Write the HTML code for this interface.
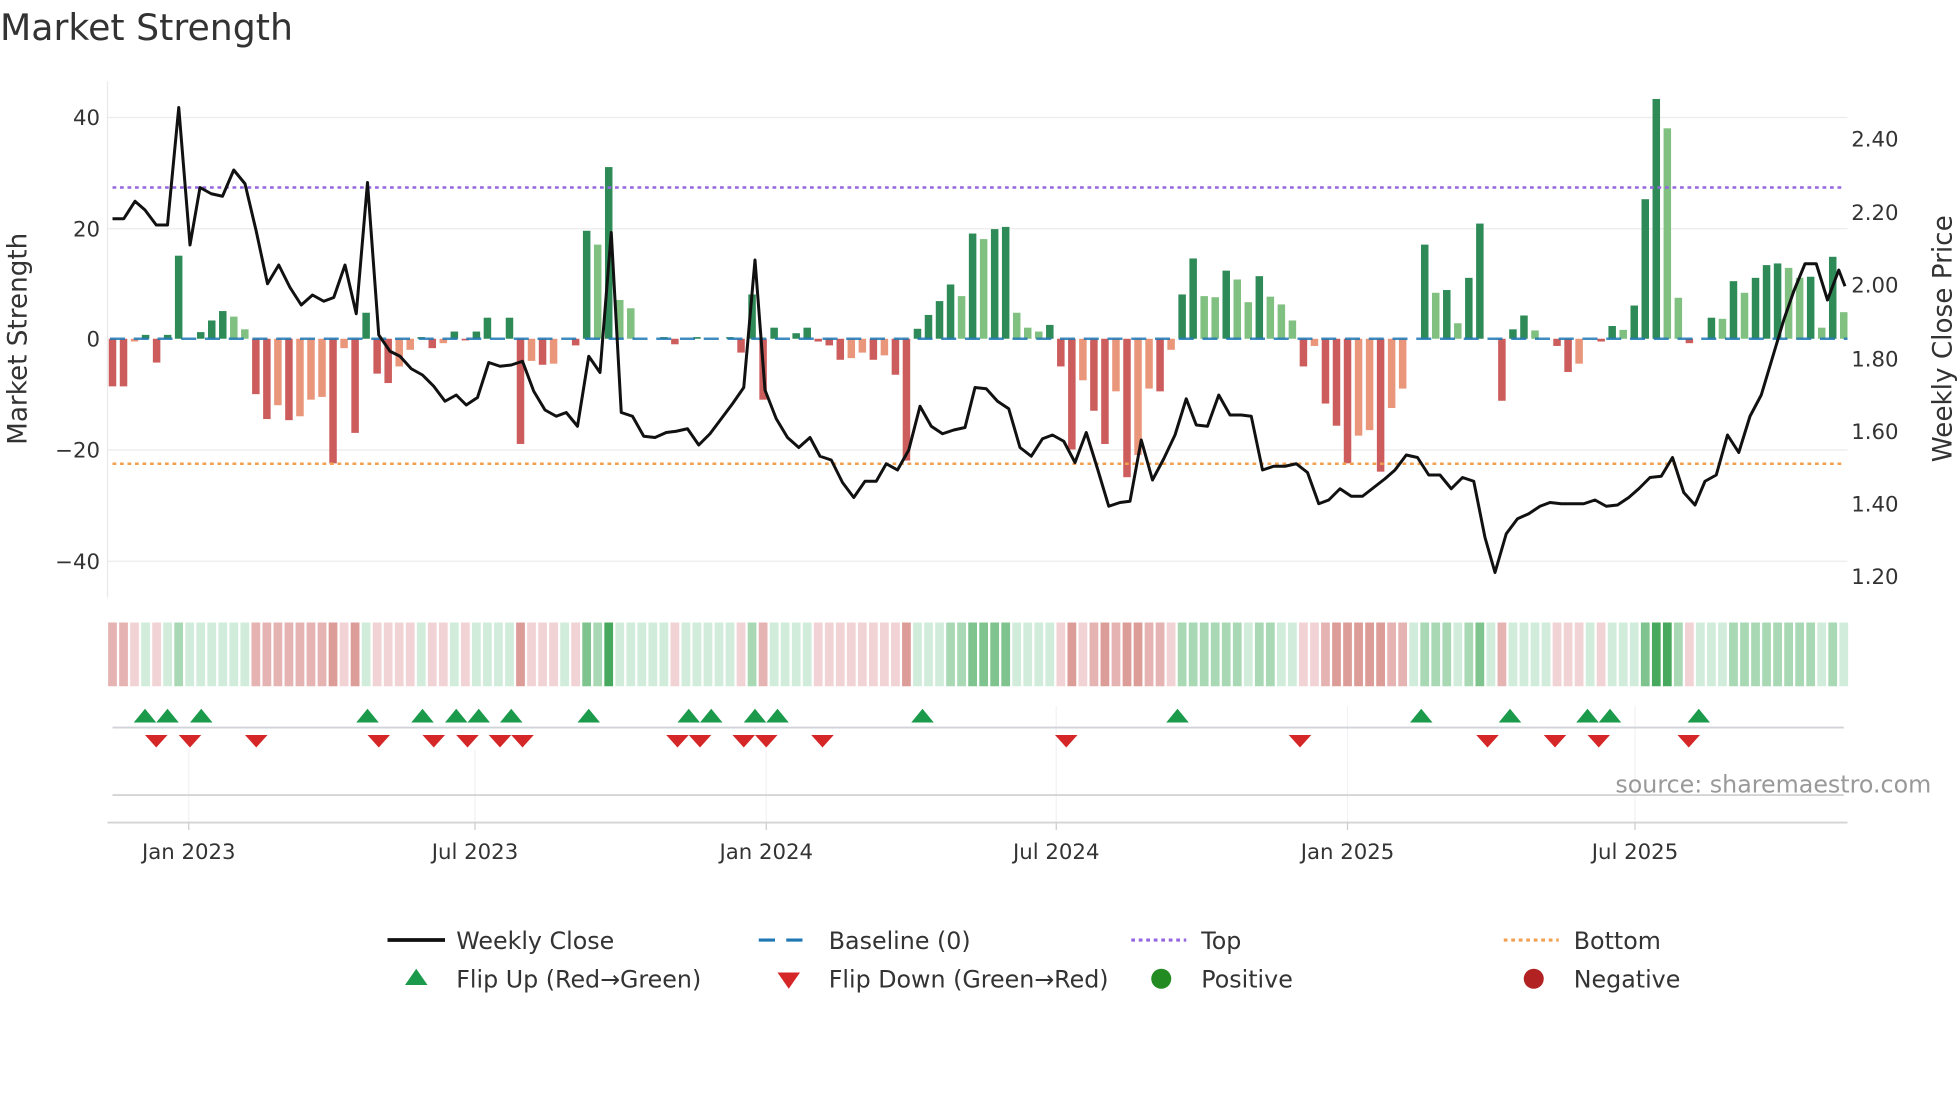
<!DOCTYPE html>
<html><head><meta charset="utf-8"><style>
html,body{margin:0;padding:0;background:#fff;}
svg{display:block;font-family:"DejaVu Sans","Liberation Sans",sans-serif;}
</style></head><body>
<svg id="s" width="1960" height="1102" viewBox="0 0 1568 881.6" xmlns="http://www.w3.org/2000/svg">
<text x="0" y="32" font-size="29" fill="#333">Market Strength</text>
<g stroke="#ececec" stroke-width="1">
<line x1="86" y1="94" x2="1478" y2="94"/><line x1="86" y1="183" x2="1478" y2="183"/>
<line x1="86" y1="360" x2="1478" y2="360"/><line x1="86" y1="449" x2="1478" y2="449"/>
</g>
<g stroke="#f2f2f4" stroke-width="1">
<line x1="151" y1="600" x2="151" y2="658"/><line x1="380" y1="600" x2="380" y2="658"/>
<line x1="613" y1="600" x2="613" y2="658"/><line x1="845" y1="565" x2="845" y2="658"/>
<line x1="1078" y1="565" x2="1078" y2="658"/><line x1="1308" y1="565" x2="1308" y2="658"/>
</g>
<line x1="86" y1="65" x2="86" y2="478" stroke="#eaeaea"/>
<g font-size="17" fill="#333" text-anchor="end">
<text x="80" y="100">40</text><text x="80" y="189">20</text><text x="80" y="277">0</text>
<text x="80" y="366">−20</text><text x="80" y="455">−40</text>
</g>
<g font-size="17" fill="#333">
<text x="1481" y="117">2.40</text><text x="1481" y="176">2.20</text><text x="1481" y="234">2.00</text>
<text x="1481" y="293">1.80</text><text x="1481" y="351">1.60</text><text x="1481" y="409">1.40</text><text x="1481" y="467">1.20</text>
</g>
<text transform="translate(21,271) rotate(-90)" font-size="21" fill="#333" text-anchor="middle">Market Strength</text>
<text transform="translate(1561,271) rotate(-90)" font-size="21" fill="#333" text-anchor="middle">Weekly Close Price</text>
<g id="bars"></g>
<line x1="88" y1="271" x2="1478" y2="271" stroke="#1f77b4" stroke-width="2" stroke-dasharray="12,7" opacity="0.85"/>
<line x1="90" y1="150" x2="1476" y2="150" stroke="#9467e0" stroke-width="2" stroke-dasharray="3,3"/>
<line x1="90" y1="371" x2="1476" y2="371" stroke="#f0a050" stroke-width="2" stroke-dasharray="3,3"/>
<polyline id="close" fill="none" stroke="#111" stroke-width="2.4" stroke-linejoin="round" points="90,175 99,175 108,161 116,168 125,180 134,180 143,86 152,196 160,150 169,155 178,157 187,136 196,147 205,185 214,227 223,212 232,230 241,244 250,236 259,241 267,238 276,212 285,251 294,146 303,268 312,281 320,285 329,295 338,300 347,309 356,321 365,316 373,324 382,318 391,290 400,293 409,292 418,289 427,313 436,328 445,333 453,330 462,341 471,285 480,298 489,186 497,330 506,333 515,349 524,350 533,346 541,345 550,343 559,356 568,347 577,335 586,323 595,310 604,208 612,312 621,335 630,350 639,358 648,350 656,365 665,368 674,386 683,398 692,385 701,385 709,371 718,376 727,360 736,325 745,341 754,347 763,344 772,342 780,310 789,311 798,321 807,327 816,358 825,365 834,351 842,348 851,353 860,370 869,346 878,375 887,405 896,402 904,401 913,352 922,384 931,367 940,348 949,319 957,340 966,341 975,316 984,332 993,332 1001,333 1010,376 1019,373 1028,373 1037,371 1046,378 1055,403 1063,400 1072,391 1081,397 1090,397 1099,390 1108,383 1116,376 1125,364 1134,366 1143,380 1152,380 1161,391 1170,382 1179,385 1188,430 1196,458 1205,427 1214,415 1223,411 1232,405 1240,402 1249,403 1258,403 1267,403 1276,400 1285,405 1294,404 1303,398 1311,391 1320,382 1329,381 1338,366 1347,394 1356,404 1364,385 1373,380 1382,348 1391,362 1400,333 1409,316 1418,286 1427,256 1435,233 1444,211 1453,211 1462,240 1471,216 1476,229"/>
<g id="strip"></g>
<line x1="90" y1="582" x2="1475" y2="582" stroke="#d0d3d8" stroke-width="1.5"/>
<g id="mk"></g>
<line x1="90" y1="636" x2="1475" y2="636" stroke="#d4d4d4" stroke-width="1.5"/>
<line x1="86" y1="658" x2="1478" y2="658" stroke="#d4d4d4" stroke-width="1.5"/>
<g stroke="#ccc"><line x1="151" y1="658" x2="151" y2="664"/><line x1="380" y1="658" x2="380" y2="664"/><line x1="613" y1="658" x2="613" y2="664"/><line x1="845" y1="658" x2="845" y2="664"/><line x1="1078" y1="658" x2="1078" y2="664"/><line x1="1308" y1="658" x2="1308" y2="664"/></g>
<g font-size="17" fill="#333" text-anchor="middle">
<text x="151" y="687">Jan 2023</text><text x="380" y="687">Jul 2023</text><text x="613" y="687">Jan 2024</text>
<text x="845" y="687">Jul 2024</text><text x="1078" y="687">Jan 2025</text><text x="1308" y="687">Jul 2025</text>
</g>
<text x="1545" y="634" font-size="19" fill="#999" text-anchor="end">source: sharemaestro.com</text>
<g font-size="19" fill="#333">
<line x1="310" y1="752" x2="356" y2="752" stroke="#111" stroke-width="3"/><text x="365" y="759">Weekly Close</text>
<line x1="607" y1="752" x2="651" y2="752" stroke="#1f77b4" stroke-width="2.5" stroke-dasharray="13,9"/><text x="663" y="759">Baseline (0)</text>
<line x1="905" y1="752" x2="949" y2="752" stroke="#9467e0" stroke-width="2.5" stroke-dasharray="3,3"/><text x="961" y="759">Top</text>
<line x1="1203" y1="752" x2="1247" y2="752" stroke="#f0a050" stroke-width="2.5" stroke-dasharray="3,3"/><text x="1259" y="759">Bottom</text>
<polygon points="324,788 342,788 333,775" fill="#1a9a4a"/><text x="365" y="790">Flip Up (Red→Green)</text>
<polygon points="622,778 640,778 631,791" fill="#d62728"/><text x="663" y="790">Flip Down (Green→Red)</text>
<circle cx="929" cy="783" r="8" fill="#228b22"/><text x="961" y="790">Positive</text>
<circle cx="1227" cy="783" r="8" fill="#b22222"/><text x="1259" y="790">Negative</text>
</g>
</svg>
<script>
var v=[-8.6,-8.6,-0.5,0.7,-4.3,0.7,15,0,1.2,3.3,5,4,1.7,-10,-14.5,-12,-14.7,-14,-11,-10.5,-22.5,-1.7,-17,4.7,-6.3,-8,-5,-2,0.3,-1.7,-0.8,1.3,-0.3,1.3,3.8,0,3.8,-19,-4,-4.7,-4.5,0,-1.2,19.5,17,31,7,5.5,0,0,0.3,-1,0,0.3,0,0,0.3,-2.5,8,-11,2,0,1,2,-0.5,-1.2,-3.8,-3.5,-2.5,-3.8,-3,-6.5,-22,1.8,4.3,6.8,9.8,7.7,19,18,19.8,20.2,4.7,2,1.3,2.5,-5,-20,-7.5,-13,-19,-9.5,-25,-21,-9,-9.5,-2,8,14.5,7.7,7.5,12.3,10.7,6.6,11.3,7.6,6.2,3.3,-5,-1.3,-11.7,-15.7,-22.5,-17.5,-16.5,-24,-12.5,-9,0,17,8.3,8.8,2.8,11,20.8,0,-11.2,1.7,4.2,1.5,0,-1.3,-6,-4.5,0,-0.5,2.3,1.6,6,25.2,43.3,38,7.4,-0.8,0,3.8,3.6,10.4,8.3,11,13.3,13.6,12.8,11,11.2,2,14.8,4.8];
var N=v.length,st=(1475-90)/(N-1),ns="http://www.w3.org/2000/svg";
var B=document.getElementById('bars'),S=document.getElementById('strip'),M=document.getElementById('mk');
function el(p,t,a){var e=document.createElementNS(ns,t);for(var k in a)e.setAttribute(k,a[k]);p.appendChild(e);return e;}
for(var i=0;i<N;i++){var x=90+i*st,a=v[i],p=i?v[i-1]:0,c;
 if(a>0)c=(a>=p)?'#2e8b57':'#80c080';else c=(a<=p)?'#cd5c5c':'#e9967a';
 if(a!==0){var h=Math.abs(a)*4.43;el(B,'rect',{x:x-3,y:a>0?271-h:271,width:6,height:h,fill:c});}
 var sc;if(a<-15)sc='#dc9d99';else if(a<-8)sc='#e6b3b3';else if(a<0)sc='#f2d3d5';else if(a>30)sc='#47a95e';else if(a>17)sc='#7fc48e';else if(a>7)sc='#a8d9b4';else sc='#d2ecdb';
 el(S,'rect',{x:x-3.5,y:498,width:7,height:51,fill:sc});}
[116,134,161,294,338,365,383,409,471,551,569,604,622,738,942,1137,1208,1270,1288,1359].forEach(function(x){el(M,'polygon',{points:(x-9)+',578 '+(x+9)+',578 '+x+',567',fill:'#1a9a4a'});});
[125,152,205,303,347,374,400,418,542,560,595,613,658,853,1040,1190,1244,1279,1351].forEach(function(x){el(M,'polygon',{points:(x-9)+',588 '+(x+9)+',588 '+x+',598',fill:'#d62728'});});
</script>
</body></html>
